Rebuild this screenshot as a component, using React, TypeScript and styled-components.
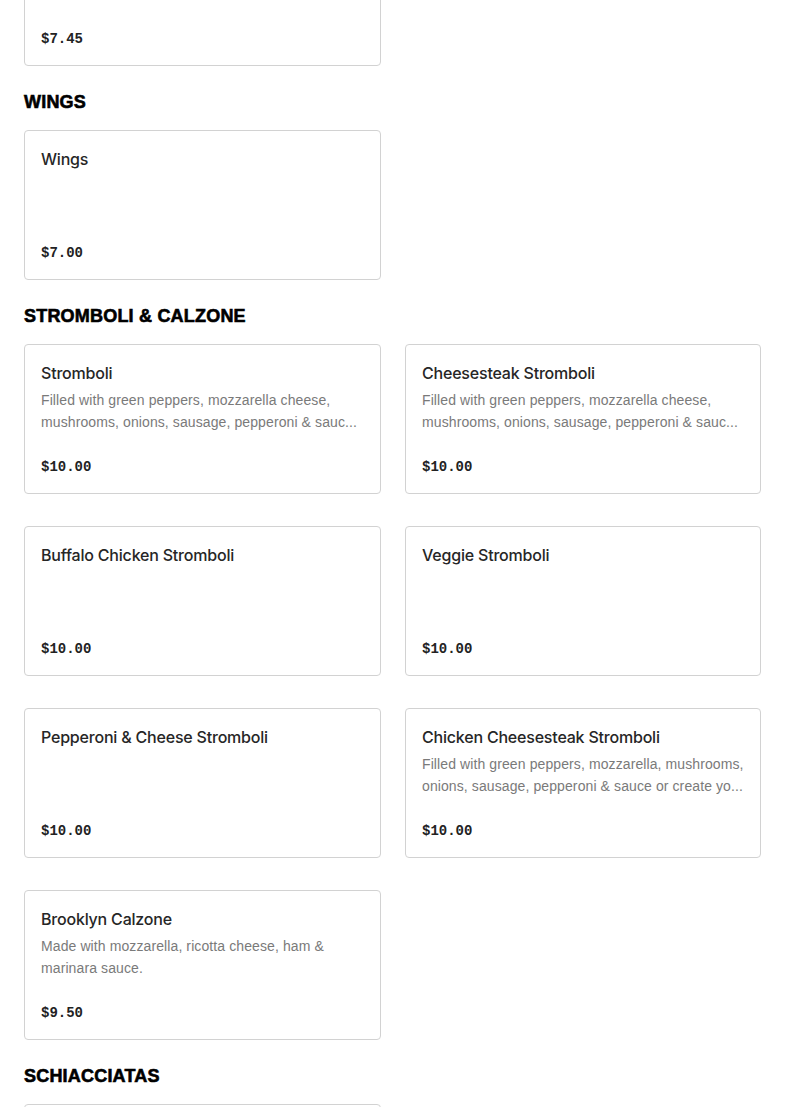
import React from "react";
import styled, { createGlobalStyle } from "styled-components";

const Global = createGlobalStyle`
  html, body { margin: 0; padding: 0; background: #ffffff; }
  body { font-family: "Inter", "Liberation Sans", sans-serif; color: #222; }
`;

const Page = styled.main`
  padding: 0 24px;
  margin-top: -84px;
  display: flex;
  flex-direction: column;
`;

const Section = styled.section`
  display: flex;
  flex-direction: column;
`;

const Heading = styled.h2`
  margin: 24px 0 16px;
  font-family: "Liberation Sans", Arial, sans-serif;
  font-weight: 900;
  font-size: 18px;
  line-height: 24px;
  letter-spacing: 0.2px;
  -webkit-text-stroke: 0.6px #000;
  color: #000;
  text-transform: uppercase;
`;

const Grid = styled.div`
  display: grid;
  grid-template-columns: 357px 356px;
  column-gap: 24px;
  row-gap: 32px;
`;

const Card = styled.article`
  box-sizing: border-box;
  height: 150px;
  border: 1px solid #d2d2d2;
  border-radius: 4px;
  padding: 16px 16px 14px;
  display: flex;
  flex-direction: column;
  background: #fff;
`;

const Title = styled.h3`
  margin: 0;
  font-size: 16px;
  line-height: 24px;
  font-weight: 500;
  letter-spacing: -0.2px;
  color: #262626;
`;

const Desc = styled.p`
  margin: 4px 0 0;
  font-family: "Liberation Sans", Arial, sans-serif;
  font-size: 14px;
  line-height: 22px;
  letter-spacing: 0.1px;
  color: #7a7a7a;
  display: -webkit-box;
  -webkit-line-clamp: 2;
  -webkit-box-orient: vertical;
  overflow: hidden;
`;

const Price = styled.div`
  margin-top: auto;
  font-family: "Liberation Mono", "DejaVu Sans Mono", monospace;
  font-weight: 700;
  font-size: 14px;
  line-height: 24px;
  color: #222;
`;

type Item = { name: string; desc?: string; price: string };
type Sec = { title?: string; items: Item[] };

const sections: Sec[] = [
  { items: [{ name: "Garlic Knots", price: "$7.45" }] },
  { title: "Wings", items: [{ name: "Wings", price: "$7.00" }] },
  {
    title: "Stromboli & Calzone",
    items: [
      {
        name: "Stromboli",
        desc: "Filled with green peppers, mozzarella cheese, mushrooms, onions, sausage, pepperoni & sauc...",
        price: "$10.00",
      },
      {
        name: "Cheesesteak Stromboli",
        desc: "Filled with green peppers, mozzarella cheese, mushrooms, onions, sausage, pepperoni & sauc...",
        price: "$10.00",
      },
      { name: "Buffalo Chicken Stromboli", price: "$10.00" },
      { name: "Veggie Stromboli", price: "$10.00" },
      { name: "Pepperoni & Cheese Stromboli", price: "$10.00" },
      {
        name: "Chicken Cheesesteak Stromboli",
        desc: "Filled with green peppers, mozzarella, mushrooms, onions, sausage, pepperoni & sauce or create yo...",
        price: "$10.00",
      },
      {
        name: "Brooklyn Calzone",
        desc: "Made with mozzarella, ricotta cheese, ham & marinara sauce.",
        price: "$9.50",
      },
    ],
  },
  { title: "Schiacciatas", items: [{ name: "Schiacciata", price: "$9.00" }] },
];

export default function App() {
  return (
    <>
      <Global />
      <Page>
        {sections.map((s, i) => (
          <Section key={i}>
            {s.title && <Heading>{s.title}</Heading>}
            <Grid>
              {s.items.map((it) => (
                <Card key={it.name}>
                  <Title>{it.name}</Title>
                  {it.desc && <Desc>{it.desc}</Desc>}
                  <Price>{it.price}</Price>
                </Card>
              ))}
            </Grid>
          </Section>
        ))}
      </Page>
    </>
  );
}
